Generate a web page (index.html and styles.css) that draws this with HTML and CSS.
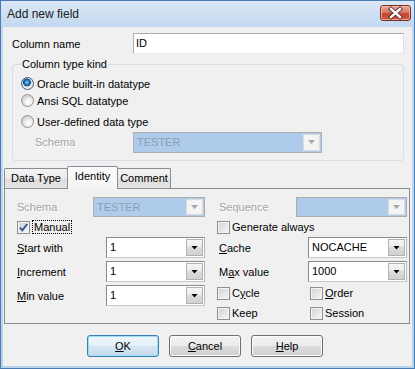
FILE: index.html
```html
<!DOCTYPE html>
<html lang="en">
<head>
    <meta charset="UTF-8">
    <title>Add new field</title>
    <link rel="stylesheet" href="styles.css">
</head>
<body>
    <div class="window">
        <div class="titlebar">
            <span class="title">Add new field</span>
            <span class="close">
                <svg width="29" height="14" viewBox="0 0 29 14">
                    <path d="M10 3 L19 11 M19 3 L10 11" stroke="#5b2a22" stroke-width="4.2" stroke-linecap="square" fill="none"/>
                    <path d="M10 3 L19 11 M19 3 L10 11" stroke="#ffffff" stroke-width="2.4" stroke-linecap="square" fill="none"/>
                </svg>
            </span>
        </div>
        <div class="client">
            <div class="name-row">
                <span class="name-label">Column name</span>
                <div class="textbox">ID</div>
            </div>

            <fieldset class="group">
                <legend>Column type kind</legend>
                <div class="radio-row first"><span class="radio checked"></span>Oracle built-in datatype</div>
                <div class="radio-row"><span class="radio"></span>Ansi SQL datatype</div>
                <div class="radio-row spaced"><span class="radio"></span>User-defined data type</div>
                <div class="schema-row">
                    <span class="disabled-label schema-label">Schema</span>
                    <div class="combo disabled w189">
                        <span class="combo-text">TESTER</span>
                        <span class="combo-btn"><i class="arrow"></i></span>
                    </div>
                </div>
            </fieldset>

            <div class="tabs">
                <div class="tab t-data">Data Type</div>
                <div class="tab t-ident active">Identity</div>
                <div class="tab t-comm">Comment</div>
            </div>
            <div class="panel">
                <div class="col col-left">
                    <div class="field h20">
                        <span class="disabled-label lbl76">Schema</span>
                        <div class="combo disabled w112 h20">
                            <span class="combo-text">TESTER</span>
                            <span class="combo-btn"><i class="arrow"></i></span>
                        </div>
                    </div>
                    <div class="field h20">
                        <span class="check"><svg width="11" height="11" viewBox="0 0 11 11"><path d="M2 5.5 L4.3 8.3 L9.2 2" stroke="#2b4e8c" stroke-width="1.8" fill="none"/></svg></span>
                        <span class="focus">Manual</span>
                    </div>
                    <div class="field h21">
                        <span class="lbl89"><u>S</u>tart with</span>
                        <div class="combo w99">
                            <span class="combo-text">1</span>
                            <span class="combo-btn"><i class="arrow"></i></span>
                        </div>
                    </div>
                    <div class="field h21 mt3">
                        <span class="lbl89"><u>I</u>ncrement</span>
                        <div class="combo w99">
                            <span class="combo-text">1</span>
                            <span class="combo-btn"><i class="arrow"></i></span>
                        </div>
                    </div>
                    <div class="field h21 mt3">
                        <span class="lbl89"><u>M</u>in value</span>
                        <div class="combo w99">
                            <span class="combo-text">1</span>
                            <span class="combo-btn"><i class="arrow"></i></span>
                        </div>
                    </div>
                </div>
                <div class="col col-right">
                    <div class="field h20">
                        <span class="disabled-label lbl79">Sequence</span>
                        <div class="combo disabled w111 h20">
                            <span class="combo-text"></span>
                            <span class="combo-btn"><i class="arrow"></i></span>
                        </div>
                    </div>
                    <div class="field h20">
                        <span class="check"></span>Generate always
                    </div>
                    <div class="field h21">
                        <span class="lbl91"><u>C</u>ache</span>
                        <div class="combo w99">
                            <span class="combo-text">NOCACHE</span>
                            <span class="combo-btn"><i class="arrow"></i></span>
                        </div>
                    </div>
                    <div class="field h21 mt3">
                        <span class="lbl91">M<u>a</u>x value</span>
                        <div class="combo w99">
                            <span class="combo-text">1000</span>
                            <span class="combo-btn"><i class="arrow"></i></span>
                        </div>
                    </div>
                    <div class="field h18 mt2">
                        <span class="opt"><span class="check"></span>C<u>y</u>cle</span>
                        <span class="opt"><span class="check"></span><u>O</u>rder</span>
                    </div>
                    <div class="field h18 mt2">
                        <span class="opt"><span class="check"></span>Keep</span>
                        <span class="opt"><span class="check"></span>Session</span>
                    </div>
                </div>
            </div>

            <div class="buttons">
                <div class="btn default"><span><u>O</u>K</span></div>
                <div class="btn"><span><u>C</u>ancel</span></div>
                <div class="btn"><span><u>H</u>elp</span></div>
            </div>
        </div>
    </div>
</body>
</html>
```

FILE: styles.css
```css
* {
    box-sizing: border-box;
}
body {
    margin: 0;
    font-family: "Liberation Sans", Arial, sans-serif;
    font-size: 11px;
    color: #000;
    background: #fff;
}
.window {
    width: 415px;
    height: 369px;
    border: 1px solid #4a7db3;
    background: linear-gradient(#dbe8f6, #c2d8ef 26px, #b9d2ec);
    display: flex;
    flex-direction: column;
}
.titlebar {
    height: 26px;
    display: flex;
    align-items: flex-start;
    justify-content: space-between;
    padding: 0 3px 0 6px;
}
.title {
    font-size: 12px;
    line-height: 13px;
    margin-top: 7px;
    color: #1b1b1b;
}
.close {
    width: 31px;
    height: 16px;
    margin-top: 4px;
    border: 1px solid #7a2e24;
    border-radius: 3px;
    background: linear-gradient(#eaa698, #d9796a 45%, #c4432f 55%, #cf5a45);
    box-shadow: inset 0 0 0 1px rgba(255, 210, 200, 0.6);
    display: flex;
    align-items: center;
    justify-content: center;
}
.client {
    flex: 1;
    margin: 0 2px 2px;
    background: #f0f0f0;
    display: flex;
    flex-direction: column;
}
.name-row {
    display: flex;
    align-items: center;
    height: 21px;
    margin-top: 6px;
    padding-left: 9px;
}
.name-label {
    width: 121px;
}
.textbox {
    width: 271px;
    height: 21px;
    border: 1px solid #abadb3;
    border-right-color: #dbdfe6;
    border-bottom-color: #e3e9ef;
    background: #fff;
    padding-left: 2px;
    line-height: 19px;
}
.group {
    margin: 4px 0 0 9px;
    width: 392px;
    min-width: 0;
    border: 1px solid #d5dfe5;
    border-radius: 3px;
    padding: 0 8px 8px 8px;
}
.group legend {
    padding: 0 1px;
    line-height: 13px;
}
.radio-row {
    display: flex;
    align-items: center;
    height: 17px;
}
.radio-row.first {
    margin-top: 4px;
}
.radio-row.spaced {
    margin-top: 4px;
}
.radio {
    width: 13px;
    height: 13px;
    border-radius: 50%;
    border: 1px solid #969696;
    background: radial-gradient(circle at 60% 65%, #ffffff 0, #f2f2f2 3px, #d6d6d6 6px);
    margin-right: 3px;
}
.radio.checked {
    border-color: #3c5d7d;
    background: radial-gradient(circle at 45% 40%, #8fd3f8 0, #2d83c2 2px, #0d4c7c 3.6px, #cfd7de 4.2px, #eef1f3 6px);
}
.schema-row {
    display: flex;
    align-items: center;
    height: 20px;
    margin-top: 2px;
}
.schema-label {
    width: 112px;
    padding-left: 14px;
}
.disabled-label {
    color: #a3a3a3;
    text-shadow: 1px 1px 0 #ffffff;
}
.tabs {
    display: flex;
    align-items: flex-end;
    height: 22px;
    margin: 5px 0 0 1px;
}
.tab {
    height: 20px;
    border: 1px solid #898c95;
    border-bottom: 0;
    border-radius: 2px 2px 0 0;
    margin-right: -1px;
    background: linear-gradient(#f3f3f3, #ebebeb 50%, #dddddd 50%, #e4e4e4);
    text-align: center;
    line-height: 19px;
}
.t-data {
    width: 64px;
}
.t-ident {
    width: 51px;
}
.t-comm {
    width: 54px;
}
.tab.active {
    height: 23px;
    margin-bottom: -1px;
    line-height: 19px;
    background: linear-gradient(#fcfcfc, #f4f4f4);
    position: relative;
    z-index: 1;
}
.panel {
    width: 406px;
    height: 136px;
    margin-left: 1px;
    border: 1px solid #898c95;
    background: #f0f0f0;
    padding: 8px 2px 0 12px;
    display: flex;
    gap: 12px;
}
.col {
    display: flex;
    flex-direction: column;
}
.col-left {
    width: 188px;
}
.col-right {
    width: 190px;
}
.field {
    display: flex;
    align-items: center;
}
.h18 {
    height: 18px;
}
.h20 {
    height: 20px;
}
.h21 {
    height: 21px;
}
.mt2 {
    margin-top: 2px;
}
.mt3 {
    margin-top: 3px;
}
.lbl76 {
    width: 76px;
}
.lbl79 {
    width: 79px;
    padding-left: 2px;
}
.lbl89 {
    width: 89px;
}
.lbl91 {
    width: 91px;
    padding-left: 2px;
}
.combo {
    display: flex;
    height: 21px;
    border: 1px solid #8a8a8a;
    border-right-color: #b8b8b8;
    border-bottom-color: #c8c8c8;
    background: #fff;
}
.combo.h20 {
    height: 20px;
}
.w99 {
    width: 99px;
}
.w111 {
    width: 111px;
}
.w112 {
    width: 112px;
}
.w189 {
    width: 189px;
}
.combo-text {
    flex: 1;
    padding-left: 3px;
    line-height: 18px;
}
.combo-btn {
    width: 17px;
    margin: 1px;
    border: 1px solid #b2b2b2;
    background: linear-gradient(#f6f6f6, #ebebeb 50%, #dcdcdc 50%, #d0d0d0);
    display: flex;
    align-items: center;
    justify-content: center;
}
.arrow {
    width: 7px;
    height: 4px;
    background: #000;
    clip-path: polygon(0 0, 100% 0, 50% 100%);
}
.combo.disabled {
    background: #aecbeb;
    border-color: #adadad;
    color: #8d9eb2;
}
.combo.disabled .combo-btn {
    background: #f4f4f4;
    border-color: #dcdcdc;
}
.combo.disabled .arrow {
    background: #a8a8a8;
}
.check {
    width: 13px;
    height: 13px;
    border: 1px solid #8e8f8f;
    background: linear-gradient(135deg, #d2d2d2, #f6f6f6);
    box-shadow: inset 0 0 0 1px #f4f4f4;
    margin-right: 2px;
    display: flex;
    align-items: center;
    justify-content: center;
}
.focus {
    border: 1px dotted #000;
    padding: 0 1px;
    line-height: 12px;
}
.opt {
    width: 93px;
    display: flex;
    align-items: center;
}
.buttons {
    display: flex;
    gap: 10px;
    margin-top: 11px;
    padding-left: 84px;
}
.btn {
    width: 72px;
    height: 22px;
    border: 1px solid #707070;
    border-radius: 3px;
    background: linear-gradient(#f2f2f2, #ebebeb 50%, #dddddd 50%, #cfcfcf);
    box-shadow: inset 0 0 0 1px #fbfbfb;
    display: flex;
    align-items: center;
    justify-content: center;
}
.btn.default {
    border-color: #3c7fb1;
    box-shadow: inset 0 0 0 1px #9fdcfb;
    background: linear-gradient(#eef6fb, #e5f0f8 50%, #d5e6f3 50%, #c9dcec);
}
```
